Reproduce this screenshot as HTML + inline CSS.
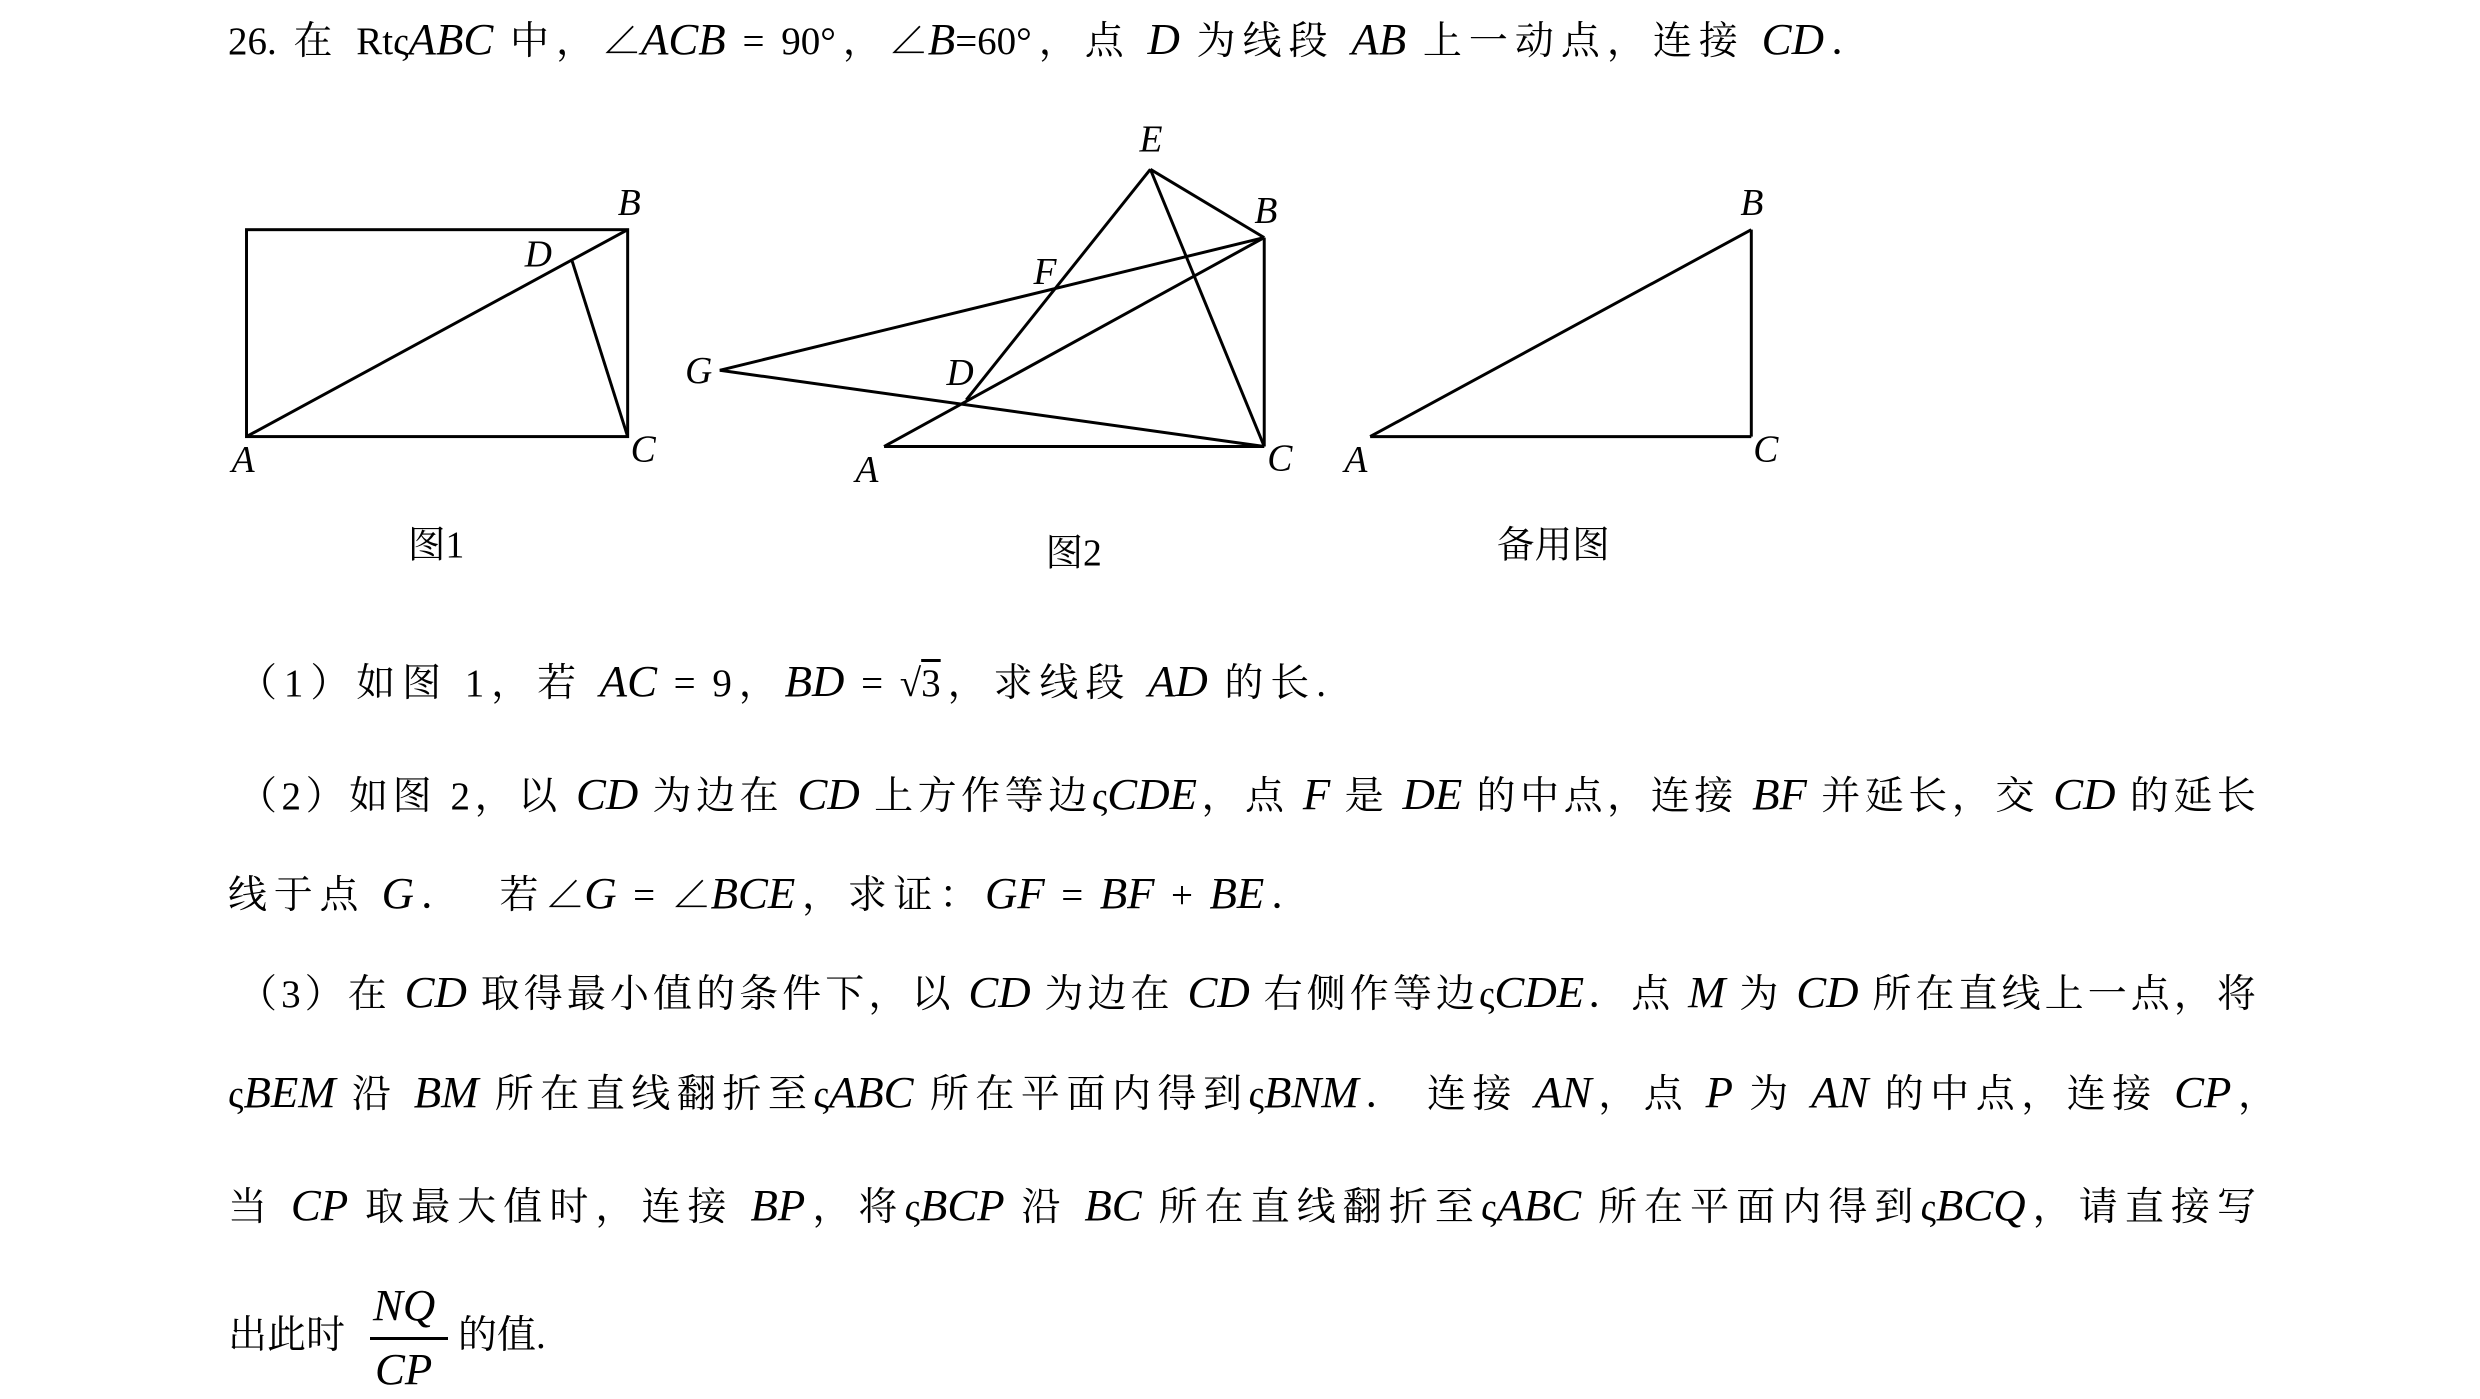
<!DOCTYPE html>
<html><head><meta charset="utf-8">
<style>
html,body{margin:0;padding:0;background:#fff;}
body{width:2480px;height:1399px;position:relative;overflow:hidden;font-family:"Liberation Serif","Noto Serif CJK SC","Noto Sans CJK SC",serif;color:#000;}
.l{position:absolute;white-space:nowrap;font-size:39px;line-height:1;text-align:justify;text-align-last:justify;}
i{font-family:"Liberation Serif",serif;font-style:italic;font-size:1.15em;}
.lab{position:absolute;font-style:italic;font-size:38px;font-family:"Liberation Serif",serif;line-height:1;}
.cap{position:absolute;font-size:38px;line-height:1;}
svg{position:absolute;left:0;top:0;}
#fig{position:absolute;left:0;top:0;width:2480px;height:700px;transform:scale(0.99);transform-origin:0 0;}
</style></head><body>
<div class="l" style="left:228px;top:17px;width:1642px;">26. 在 Rtς<i>ABC</i> 中，∠<i>ACB</i> = 90°，∠<i>B</i>=60°，点 <i>D</i> 为线段 <i>AB</i> 上一动点，连接 <i>CD</i>．</div>

<div id="fig">
<svg width="2480" height="700">
<g stroke="#000" fill="none" stroke-width="3">
<rect x="249" y="232" width="385" height="209"/>
<line x1="249" y1="441" x2="634" y2="232"/>
<line x1="578" y1="264" x2="634" y2="441"/>
<line x1="893" y1="451" x2="1277" y2="451"/>
<line x1="893" y1="451" x2="1277" y2="240"/>
<line x1="1277" y1="240" x2="1277" y2="451"/>
<line x1="1162" y1="171" x2="1277" y2="240"/>
<line x1="1162" y1="171" x2="1277" y2="451"/>
<line x1="1162" y1="171" x2="976" y2="404"/>
<line x1="727" y1="374" x2="1277" y2="240"/>
<line x1="727" y1="374" x2="1277" y2="451"/>
<line x1="1384" y1="441" x2="1769" y2="441"/>
<line x1="1384" y1="441" x2="1769" y2="232"/>
<line x1="1769" y1="232" x2="1769" y2="441"/>
</g></svg>
<div class="lab" style="left:624px;top:186px;">B</div>
<div class="lab" style="left:530px;top:238px;">D</div>
<div class="lab" style="left:234px;top:446px;">A</div>
<div class="lab" style="left:637px;top:435px;">C</div>
<div class="cap" style="left:412px;top:532px;">图1</div>

<div class="lab" style="left:1151px;top:122px;">E</div>
<div class="lab" style="left:1267px;top:194px;">B</div>
<div class="lab" style="left:1044px;top:256px;">F</div>
<div class="lab" style="left:692px;top:356px;">G</div>
<div class="lab" style="left:956px;top:358px;">D</div>
<div class="lab" style="left:864px;top:456px;">A</div>
<div class="lab" style="left:1280px;top:444px;">C</div>
<div class="cap" style="left:1056px;top:540px;">图2</div>

<div class="lab" style="left:1758px;top:186px;">B</div>
<div class="lab" style="left:1358px;top:446px;">A</div>
<div class="lab" style="left:1771px;top:435px;">C</div>
<div class="cap" style="left:1512px;top:532px;">备用图</div>
</div>

<div class="l" style="left:238px;top:659px;width:1088px;">（1）如图 1，若 <i>AC</i> = 9，<i>BD</i> = √<span style="text-decoration:overline">3</span>，求线段 <i>AD</i> 的长.</div>
<div class="l" style="left:238px;top:772px;width:2018px;">（2）如图 2，以 <i>CD</i> 为边在 <i>CD</i> 上方作等边ς<i>CDE</i>，点 <i>F</i> 是 <i>DE</i> 的中点，连接 <i>BF</i> 并延长，交 <i>CD</i> 的延长</div>
<div class="l" style="left:228px;top:871px;width:1082px;">线于点 <i>G</i>．&nbsp; 若∠<i>G</i> = ∠<i>BCE</i>，求证：<i>GF</i> = <i>BF</i> + <i>BE</i>．</div>
<div class="l" style="left:238px;top:970px;width:2018px;">（3）在 <i>CD</i> 取得最小值的条件下，以 <i>CD</i> 为边在 <i>CD</i> 右侧作等边ς<i>CDE</i>．点 <i>M</i> 为 <i>CD</i> 所在直线上一点，将</div>
<div class="l" style="left:228px;top:1070px;width:2049px;">ς<i>BEM</i> 沿 <i>BM</i> 所在直线翻折至ς<i>ABC</i> 所在平面内得到ς<i>BNM</i>．&nbsp;连接 <i>AN</i>，点 <i>P</i> 为 <i>AN</i> 的中点，连接 <i>CP</i>，</div>
<div class="l" style="left:228px;top:1183px;width:2028px;">当 <i>CP</i> 取最大值时，连接 <i>BP</i>，将ς<i>BCP</i> 沿 <i>BC</i> 所在直线翻折至ς<i>ABC</i> 所在平面内得到ς<i>BCQ</i>，请直接写</div>
<div class="l" style="left:228px;top:1316px;text-align:left;text-align-last:left;">出此时</div>
<div class="l" style="left:373px;top:1283px;text-align:left;text-align-last:left;"><i>NQ</i></div>
<div style="position:absolute;left:370px;top:1337px;width:78px;height:3px;background:#000;"></div>
<div class="l" style="left:375px;top:1347px;text-align:left;text-align-last:left;"><i>CP</i></div>
<div class="l" style="left:458px;top:1316px;text-align:left;text-align-last:left;">的值.</div>
</body></html>
